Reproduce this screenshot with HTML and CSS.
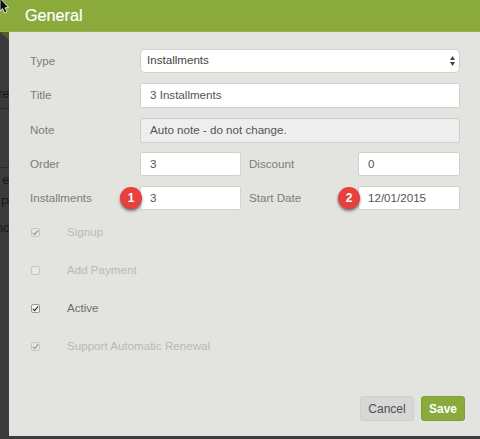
FILE: index.html
```html
<!DOCTYPE html>
<html lang="en">
<head>
<meta charset="utf-8">
<title>General</title>
<link rel="stylesheet" href="styles.css">
</head>
<body>
<div class="backdrop">
  <span class="frag f1">re</span>
  <span class="frag f2">e</span>
  <span class="frag f3">a P</span>
  <span class="frag f4">nc</span>
  <i class="rule r1"></i>
  <i class="rule r2"></i>
</div>
<header class="ribbon"><h1>General</h1></header>
<svg class="fold" width="9" height="8" viewBox="0 0 9 8"><path d="M0 0H9V8Z" fill="#4f6123"/></svg>
<svg class="cursor" width="10" height="16" viewBox="0 0 10 16"><path d="M0-2V11L2.6 8.6 4.6 13 7 12 5 7.800 8.500 7.500Z" fill="#111" stroke="#fff" stroke-width=".8"/></svg>
<main class="dialog">
  <div class="row r-type">
    <label class="lbl">Type</label>
    <div class="field select">Installments
      <svg class="updown" width="5" height="10" viewBox="0 0 5 10"><path d="M2.500 0L5 4H0ZM2.500 10L0 6H5Z" fill="#444"/></svg>
    </div>
  </div>
  <div class="row r-title">
    <label class="lbl">Title</label>
    <div class="field wide">3 Installments</div>
  </div>
  <div class="row r-note">
    <label class="lbl">Note</label>
    <div class="field wide off">Auto note - do not change.</div>
  </div>
  <div class="row r-order">
    <label class="lbl">Order</label>
    <div class="field half">3</div>
    <label class="lbl2">Discount</label>
    <div class="field half2">0</div>
  </div>
  <div class="row r-inst">
    <label class="lbl">Installments</label>
    <div class="field half"><span class="badge b1">1</span>3</div>
    <label class="lbl2">Start Date</label>
    <div class="field half2"><span class="badge b2">2</span>12/01/2015</div>
  </div>
  <div class="checks">
    <div class="check dis"><span class="box on"></span><span class="txt">Signup</span></div>
    <div class="check dis"><span class="box"></span><span class="txt">Add Payment</span></div>
    <div class="check"><span class="box on"></span><span class="txt">Active</span></div>
    <div class="check dis"><span class="box on"></span><span class="txt">Support Automatic Renewal</span></div>
  </div>
  <div class="actions">
    <button class="btn cancel">Cancel</button>
    <button class="btn save">Save</button>
  </div>
</main>
</body>
</html>
```
FILE: styles.css
```css
html, body { margin: 0; padding: 0; }
body {
  width: 480px;
  height: 439px;
  overflow: hidden;
  position: relative;
  background: #3b3b3b;
  font-family: "Liberation Sans", Arial, sans-serif;
  font-size: 11.6px;
  color: #555;
}
.backdrop { position: absolute; left: 0; top: 0; width: 9px; height: 439px; overflow: hidden; }
.frag { position: absolute; right: 0; font-size: 12px; color: #161616; white-space: nowrap; line-height: 14px; }
.f1 { top: 87px; }
.f2 { top: 173px; }
.f3 { top: 196px; }
.f4 { top: 221px; }
.rule { position: absolute; left: 0; right: 0; height: 1px; background: #2c2c2c; }
.r1 { top: 108px; }
.r2 { top: 167px; }
.ribbon {
  height: 31px;
  background: #8aaa3c;
  border-bottom: 1px solid #96b350;
  padding-left: 25px;
  position: relative;
}
.ribbon h1 {
  margin: 0;
  font-size: 16.200px;
  font-weight: 400;
  line-height: 30px;
  color: #fff;
  -webkit-text-stroke: .2px #fff;
}
.fold { position: absolute; left: 0; top: 32px; }
.cursor { position: absolute; left: 0; top: 0; }
.dialog {
  margin-left: 9px;
  height: 404px;
  background: #e3e3df;
  box-sizing: border-box;
  padding: 17px 0 0 21px;
  position: relative;
  display: flex;
  flex-direction: column;
}
.row { display: flex; align-items: center; }
.r-type { height: 24px; }
.r-title { height: 25px; margin-top: 10px; }
.r-note { height: 25px; margin-top: 10px; }
.r-order { height: 24px; margin-top: 9px; }
.r-inst { height: 24px; margin-top: 10px; }
.lbl { width: 110px; color: #7c7c7c; padding-bottom: 2px; }
.lbl2 { width: 109px; margin-left: 8px; color: #7c7c7c; padding-bottom: 2px; }
.r-title .lbl, .r-note .lbl { padding-bottom: 3px; }
.field {
  box-sizing: border-box;
  height: 100%;
  background: #fff;
  border: 1px solid #d2d2ce;
  border-radius: 2px;
  padding-left: 9px;
  padding-bottom: 2px;
  display: flex;
  align-items: center;
  color: #555;
  position: relative;
}
.wide { width: 320px; }
.off { background: #eeeeee; border-color: #cfcfcb; }
.half { width: 101px; }
.half2 { width: 102px; }
.select {
  width: 320px;
  border-radius: 5px;
  padding-left: 6px;
  padding-bottom: 4px;
  color: #444;
}
.updown { position: absolute; right: 4px; top: 6px; }
.badge {
  position: absolute;
  left: -21px;
  top: 0;
  width: 22px;
  height: 22px;
  border-radius: 50%;
  background: #e8403c;
  color: #fff;
  font-weight: 700;
  font-size: 12px;
  line-height: 22px;
  text-align: center;
  box-shadow: 0 2px 3px rgba(0,0,0,.5);
  z-index: 1;
}
.checks { display: flex; flex-direction: column; gap: 24px; margin-top: 15px; }
.check { display: flex; align-items: center; height: 14px; color: #6e6e6e; }
.txt { padding-bottom: 2px; }
.dis { color: #b9b9b6; }
.box {
  box-sizing: border-box;
  width: 9px;
  height: 9px;
  margin: 1px 27px 0 1px;
  border: 1px solid #c6c6c2;
  border-radius: 2px;
  background: #e6e6e3;
  position: relative;
}
.check:not(.dis) .box { border-color: #9a9a98; background: #f2f2f2; }
.box.on::after {
  content: "";
  position: absolute;
  left: 2px;
  top: 0;
  width: 2px;
  height: 5px;
  border: solid #8c8c8c;
  border-width: 0 1.2px 1.2px 0;
  transform: rotate(40deg);
}
.check:not(.dis) .box.on::after { border-color: #222; }
.actions { position: absolute; right: 15px; bottom: 15px; display: flex; gap: 7px; }
.btn {
  height: 25px;
  box-sizing: border-box;
  border-radius: 3px;
  font-family: inherit;
  font-size: 12px;
  padding: 0;
}
.cancel { width: 54px; background: #d7d7d5; border: 1px solid #cfcfcd; color: #4a4f5a; }
.save { width: 44px; background: #8aaa3c; border: 1px solid #7f9d38; color: #fff; font-weight: 700; }
```
